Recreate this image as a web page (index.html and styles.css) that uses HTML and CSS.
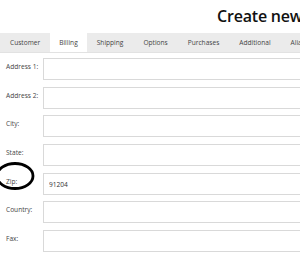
FILE: index.html
```html
<!DOCTYPE html>
<html lang="en">

<head>
    <meta charset="utf-8">
    <title>Create new customer</title>
    <link rel="stylesheet" href="styles.css">
</head>

<body>
    <h1 class="titel">Create new customer</h1>

    <ul class="faner">
        <li>Customer</li>
        <li class="aktiv">Billing</li>
        <li>Shipping</li>
        <li>Options</li>
        <li>Purchases</li>
        <li>Additional</li>
        <li>Alias</li>
    </ul>

    <form class="skema">
        <div class="raekke"><label>Address 1:</label><input type="text"></div>
        <div class="raekke"><label>Address 2:</label><input type="text"></div>
        <div class="raekke"><label>City:</label><input type="text"></div>
        <div class="raekke"><label>State:</label><input type="text"></div>
        <div class="raekke zip">
            <label>Zip:</label><input type="text" value="91204">
            <svg class="ring" width="38" height="30" viewBox="0 0 38 30">
                <ellipse cx="15" cy="15" rx="18" ry="12.5" fill="none" stroke="#000" stroke-width="2.8" />
            </svg>
        </div>
        <div class="raekke"><label>Country:</label><input type="text"></div>
        <div class="raekke"><label>Fax:</label><input type="text"></div>
    </form>
</body>

</html>
```

FILE: styles.css
```css
body {
    margin: 0;
    width: 300px;
    height: 266px;
    overflow: hidden;
    background-color: #fff;
    font-family: "Open Sans", "DejaVu Sans", sans-serif;
    color: #333;
}

.titel {
    margin: 0;
    padding: 6px 0 0 217px;
    height: 27px;
    box-sizing: border-box;
    white-space: nowrap;
    overflow: hidden;
    font-size: 16px;
    font-weight: 600;
    letter-spacing: -0.2px;
    color: #111;
    line-height: 20px;
}

.faner {
    display: flex;
    margin: 6px 0 0 0;
    padding: 0;
    list-style: none;
    height: 19px;
    background-color: #ebebeb;
    border-bottom: 1px solid #e2e2e2;
    white-space: nowrap;
    overflow: hidden;
}

.faner li {
    padding: 0 10px;
    font-size: 6.6px;
    line-height: 19px;
    color: #444;
}

.faner .aktiv {
    background-color: #fff;
    color: #444;
    padding: 0 9px;
    margin-bottom: -1px;
}

.skema {
    padding-top: 5px;
}

.raekke {
    display: flex;
    position: relative;
    height: 22px;
    margin-bottom: 6.7px;
}

label {
    width: 43px;
    flex-shrink: 0;
    padding: 4px 0 0 6px;
    box-sizing: border-box;
    font-size: 6.6px;
    color: #444;
}

input {
    width: 257px;
    flex-shrink: 0;
    height: 22px;
    margin: 0;
    padding: 2px 0 0 5px;
    box-sizing: border-box;
    border: 1px solid #d9d9d9;
    border-right: none;
    font-family: inherit;
    font-size: 6.6px;
    color: #333;
}

.ring {
    position: absolute;
    left: 0;
    top: -12px;
}
```
